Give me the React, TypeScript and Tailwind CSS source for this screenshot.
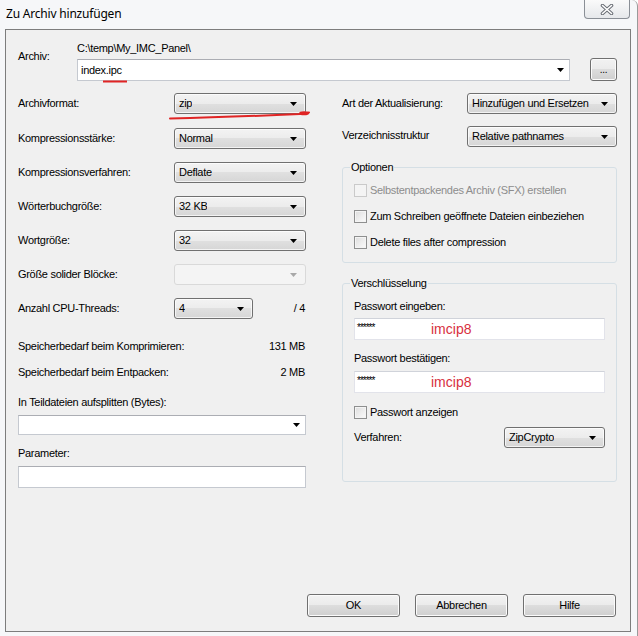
import React from "react";

const Arrow = ({ color = "#000" }: { color?: string }) => (
  <svg width="7" height="4" viewBox="0 0 7 4" className="shrink-0">
    <path d="M0 0h7L3.5 4z" fill={color} />
  </svg>
);

const Combo = ({
  value,
  className = "",
  disabled = false,
}: {
  value: string;
  className?: string;
  disabled?: boolean;
}) => (
  <div
    className={
      "h-[21px] flex items-center justify-between pl-[4px] pr-[8px] rounded-[3px] border " +
      (disabled
        ? "border-[#d9d9d9] bg-[#f4f4f4] "
        : "border-[#707070] bg-[linear-gradient(to_bottom,#f3f3f3_0%,#ececec_50%,#e0e0e0_50%,#d6d6d6_100%)] shadow-[inset_0_0_0_1px_rgba(255,255,255,0.7)] ") +
      className
    }
  >
    <span className="truncate">{value}</span>
    <Arrow color={disabled ? "#a8a8a8" : "#000"} />
  </div>
);

const Check = ({ label, disabled = false }: { label: string; disabled?: boolean }) => (
  <div className="flex items-center h-[14px]">
    <div
      className={
        "w-[13px] h-[13px] border " +
        (disabled
          ? "border-[#cacaca] bg-[#f4f4f4]"
          : "border-[#8e8f8f] bg-[linear-gradient(135deg,#dcdcdc_0%,#f0f0f0_60%,#fbfbfb_100%)] shadow-[inset_0_0_0_1px_#f4f4f4]")
      }
    />
    <span className={"ml-[3px] " + (disabled ? "text-[#8d8d8d]" : "")}>{label}</span>
  </div>
);

const Btn = ({ label, className = "" }: { label: string; className?: string }) => (
  <div
    className={
      "h-[23px] flex items-center justify-center rounded-[3px] border border-[#707070] bg-[linear-gradient(to_bottom,#f2f2f2_0%,#ebebeb_50%,#dddddd_50%,#cfcfcf_100%)] shadow-[inset_0_0_0_1px_#fbfbfb] " +
      className
    }
  >
    {label}
  </div>
);

const Row = ({ label, children }: { label: string; children: React.ReactNode }) => (
  <div className="flex items-center h-[21px]">
    <span className="w-[156px] shrink-0">{label}</span>
    {children}
  </div>
);

export default function App() {
  return (
    <div className="relative w-[638px] h-[636px] overflow-hidden bg-[#f6f7f9] border-r border-[#9a9a9a] rounded-tr-[6px] font-['Liberation_Sans',Arial,sans-serif] text-[11px] tracking-[-0.3px] text-black">
      {/* Title bar */}
      <div className="h-[29px] flex items-start">
        <span className="pl-[6px] pt-[6px] font-['Noto_Sans',sans-serif] text-[12px] tracking-[-0.2px] leading-[16px] text-black">
          Zu Archiv hinzufügen
        </span>
        <div className="ml-auto mr-[7px] w-[46px] h-[19px] rounded-b-[4px] border border-t-0 border-[#8a8f96] bg-[linear-gradient(to_bottom,#fafafa,#e6e8eb)] flex items-center justify-center">
          <svg width="14" height="11" viewBox="0 0 14 11">
            <path d="M2.5 1.5L11.5 9.5M11.5 1.5L2.5 9.5" stroke="#6a6e75" strokeWidth="3.6" strokeLinecap="round" />
            <path d="M2.5 1.5L11.5 9.5M11.5 1.5L2.5 9.5" stroke="#ffffff" strokeWidth="1.6" strokeLinecap="round" />
          </svg>
        </div>
      </div>

      {/* Client area */}
      <div className="ml-[5px] mr-[6px] h-[603px] border border-[#7d7d7d] bg-[#f0f0f0] flex flex-col">
        <div className="pl-[12px] pr-[13px] pt-[11px]">
          {/* Archiv row */}
          <div className="flex items-start">
            <span className="w-[59px] shrink-0 pt-[8px] leading-[14px]">Archiv:</span>
            <div className="flex flex-col">
              <span className="h-[14px] leading-[14px]">C:\temp\My_IMC_Panel\</span>
              <div className="mt-[4px] w-[493px] h-[22px] bg-white border border-[#c5c9d0] border-t-[#abadb3] flex items-center justify-between pl-[3px] pr-[5px]">
                <span>index.ipc</span>
                <Arrow />
              </div>
            </div>
            <div className="ml-auto mt-[17px]">
              <Btn label="..." className="w-[27px] h-[22px] text-[10px]" />
            </div>
          </div>

          {/* Two columns */}
          <div className="flex mt-[12px]">
            {/* Left column */}
            <div className="w-[288px] flex flex-col">
              <Row label="Archivformat:">
                <Combo value="zip" className="w-[132px]" />
              </Row>
              <div className="mt-[14px]">
                <Row label="Kompressionsstärke:">
                  <Combo value="Normal" className="w-[132px]" />
                </Row>
              </div>
              <div className="mt-[13px]">
                <Row label="Kompressionsverfahren:">
                  <Combo value="Deflate" className="w-[132px]" />
                </Row>
              </div>
              <div className="mt-[13px]">
                <Row label="Wörterbuchgröße:">
                  <Combo value="32 KB" className="w-[132px]" />
                </Row>
              </div>
              <div className="mt-[13px]">
                <Row label="Wortgröße:">
                  <Combo value="32" className="w-[132px]" />
                </Row>
              </div>
              <div className="mt-[13px]">
                <Row label="Größe solider Blöcke:">
                  <Combo value="" className="w-[132px]" disabled />
                </Row>
              </div>
              <div className="mt-[13px]">
                <Row label="Anzahl CPU-Threads:">
                  <Combo value="4" className="w-[79px]" />
                  <span className="flex-1 text-right pr-[1px]">/ 4</span>
                </Row>
              </div>
              <div className="mt-[20px] flex justify-between leading-[14px] pr-[1px]">
                <span>Speicherbedarf beim Komprimieren:</span>
                <span>131 MB</span>
              </div>
              <div className="mt-[12px] flex justify-between leading-[14px] pr-[1px]">
                <span>Speicherbedarf beim Entpacken:</span>
                <span>2 MB</span>
              </div>
              <span className="mt-[16px] leading-[14px]">In Teildateien aufsplitten (Bytes):</span>
              <div className="mt-[6px] h-[20px] bg-white border border-[#c5c9d0] border-t-[#abadb3] flex items-center justify-end pr-[5px]">
                <Arrow />
              </div>
              <span className="mt-[11px] leading-[14px]">Parameter:</span>
              <div className="mt-[6px] h-[22px] bg-white border border-[#c5c9d0] border-t-[#abadb3]" />
            </div>

            {/* Right column */}
            <div className="ml-[36px] w-[275px] flex flex-col">
              <div className="flex items-center h-[21px]">
                <span className="w-[125px] shrink-0">Art der Aktualisierung:</span>
                <Combo value="Hinzufügen und Ersetzen" className="w-[150px]" />
              </div>
              <div className="mt-[12px] flex items-center h-[21px]">
                <span className="w-[125px] shrink-0 -mt-[3px]">Verzeichnisstruktur</span>
                <Combo value="Relative pathnames" className="w-[150px]" />
              </div>

              <fieldset className="mt-[13px] border border-[#d5dfe5] rounded-[3px] pl-[11px] pr-[11px] pb-[13px]">
                <legend className="-ml-[4px] px-[1px] leading-[14px]">Optionen</legend>
                <div className="mt-[9px] flex flex-col gap-[12px]">
                  <Check label="Selbstentpackendes Archiv (SFX) erstellen" disabled />
                  <Check label="Zum Schreiben geöffnete Dateien einbeziehen" />
                  <Check label="Delete files after compression" />
                </div>
              </fieldset>

              <fieldset className="mt-[13px] border border-[#d5dfe5] rounded-[3px] pl-[11px] pr-[11px] pb-[33px]">
                <legend className="-ml-[4px] px-[1px] leading-[14px]">Verschlüsselung</legend>
                <div className="mt-[9px] leading-[14px]">Passwort eingeben:</div>
                <div className="mt-[5px] h-[22px] bg-white border border-[#e2e3ea] border-t-[#d0d3da] flex items-center pl-[2px]">
                  <span className="w-[74px] -mt-[4px] text-[10px] tracking-[-1px]">******</span>
                  <span className="text-[14px] tracking-normal text-[#d8303e]">imcip8</span>
                </div>
                <div className="mt-[11px] leading-[14px]">Passwort bestätigen:</div>
                <div className="mt-[6px] h-[22px] bg-white border border-[#e2e3ea] border-t-[#d0d3da] flex items-center pl-[2px]">
                  <span className="w-[74px] -mt-[4px] text-[10px] tracking-[-1px]">******</span>
                  <span className="text-[14px] tracking-normal text-[#d8303e]">imcip8</span>
                </div>
                <div className="mt-[12px]">
                  <Check label="Passwort anzeigen" />
                </div>
                <div className="mt-[8px] flex items-center h-[21px]">
                  <span className="flex-1">Verfahren:</span>
                  <Combo value="ZipCrypto" className="w-[101px]" />
                </div>
              </fieldset>
            </div>
          </div>
        </div>

        {/* Buttons */}
        <div className="mt-auto flex justify-end gap-[15px] pr-[14px] pb-[14px]">
          <Btn label="OK" className="w-[93px]" />
          <Btn label="Abbrechen" className="w-[93px]" />
          <Btn label="Hilfe" className="w-[93px]" />
        </div>
      </div>

      {/* Red annotations drawn over the screenshot */}
      <svg className="absolute inset-0 pointer-events-none" width="638" height="636" viewBox="0 0 638 636">
        <path d="M103 81.5L127 81.5" stroke="#e02424" strokeWidth="2" />
        <path d="M170 118.5C215 117.5 255 116 300 114L309 112.5" stroke="#e02424" strokeWidth="2" fill="none" strokeLinecap="round" />
        <ellipse cx="304" cy="113.3" rx="5" ry="2" fill="#e02424" />
      </svg>
    </div>
  );
}
